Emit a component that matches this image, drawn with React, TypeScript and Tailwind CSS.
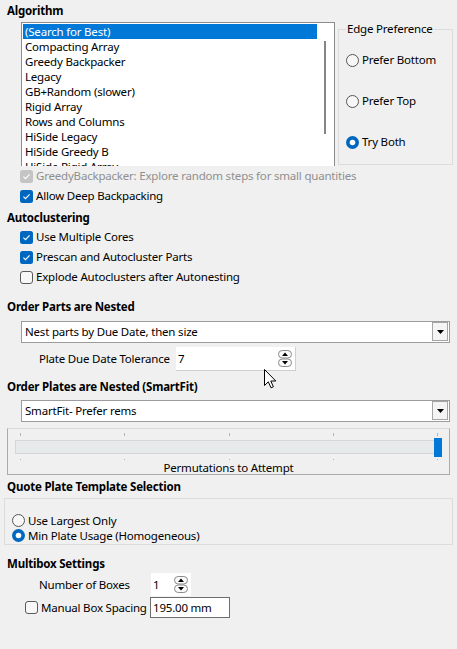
import React from 'react';

const algorithms = [
  '(Search for Best)',
  'Compacting Array',
  'Greedy Backpacker',
  'Legacy',
  'GB+Random (slower)',
  'Rigid Array',
  'Rows and Columns',
  'HiSide Legacy',
  'HiSide Greedy B',
  'HiSide Rigid Array',
];

function CheckBox({ checked, disabled }: { checked?: boolean; disabled?: boolean }) {
  const fill = disabled ? '#c4c4c4' : checked ? '#0067c0' : '#f7f7f7';
  return (
    <svg width="13" height="13" viewBox="0 0 13 13" className="shrink-0">
      <rect
        x={checked || disabled ? 0 : 0.5}
        y={checked || disabled ? 0 : 0.5}
        width={checked || disabled ? 13 : 12}
        height={checked || disabled ? 13 : 12}
        rx="2.5"
        fill={fill}
        stroke={checked || disabled ? 'none' : '#5a5a5a'}
      />
      {(checked || disabled) && (
        <path d="M3.4 6.7 L5.5 8.7 L9.6 4.3" fill="none" stroke="#fff" strokeWidth="1.1" />
      )}
    </svg>
  );
}

function RadioDot({ checked }: { checked?: boolean }) {
  return (
    <svg width="13" height="13" viewBox="0 0 13 13" className="shrink-0">
      {checked ? (
        <>
          <circle cx="6.5" cy="6.5" r="6.5" fill="#0067c0" />
          <circle cx="6.5" cy="6.5" r="2.8" fill="#fff" />
        </>
      ) : (
        <circle cx="6.5" cy="6.5" r="6" fill="#f7f7f7" stroke="#555" />
      )}
    </svg>
  );
}

function Check({ label, checked, disabled }: { label: string; checked?: boolean; disabled?: boolean }) {
  return (
    <div className="flex items-center h-[20px] pl-[20px] gap-[3px]">
      <CheckBox checked={checked} disabled={disabled} />
      <span className={`whitespace-nowrap ${disabled ? 'text-[#8f8f8f]' : ''}`}>{label}</span>
    </div>
  );
}

function Radio({ label, checked, className = '' }: { label: string; checked?: boolean; className?: string }) {
  return (
    <div className={`flex items-center gap-[3px] ${className}`}>
      <RadioDot checked={checked} />
      <span className="whitespace-nowrap">{label}</span>
    </div>
  );
}

function Heading({ children, className = '' }: { children: React.ReactNode; className?: string }) {
  return <div className={`flex items-center pl-[7px] font-bold whitespace-nowrap ${className}`}>{children}</div>;
}

function Combo({ text }: { text: string }) {
  return (
    <div className="flex items-center ml-[21px] w-[429px] h-[22px] bg-white border border-[#9c9c9c] pl-[3px] pr-[1px]">
      <span className="flex-1 whitespace-nowrap">{text}</span>
      <div className="flex items-center justify-center w-[16px] h-[19px] mb-[1px] border border-[#a6a6a6] bg-[#f4f4f4]">
        <svg width="7" height="4" viewBox="0 0 7 4">
          <path d="M0 0 H7 L3.5 4 Z" fill="#000" />
        </svg>
      </div>
    </div>
  );
}

function SpinButtons() {
  return (
    <svg width="14" height="17" viewBox="0 0 14 17" className="shrink-0">
      <rect x="0.5" y="0.5" width="13" height="7.5" rx="3.7" fill="#fafafa" stroke="#8a8a8a" />
      <rect x="0.5" y="9" width="13" height="7.5" rx="3.7" fill="#fafafa" stroke="#8a8a8a" />
      <path d="M4 6 L7 2.6 L10 6 Z" fill="#000" />
      <path d="M4 11 L7 14.4 L10 11 Z" fill="#000" />
    </svg>
  );
}

export default function App() {
  return (
    <div className="relative w-[457px] h-[649px] overflow-hidden bg-[#f0f0f0] font-['Noto_Sans',sans-serif] text-[11.5px] tracking-[-0.2px] leading-[16px] text-black">
      {/* Algorithm */}
      <Heading className="h-[19px] pt-[3px]">Algorithm</Heading>
      <div className="flex mt-[3px] h-[144px]">
        <div className="relative ml-[21px] w-[314px] h-[144px] bg-white border-l border-t border-r border-[#8c8c8c] pt-[1px] overflow-hidden">
          {algorithms.map((a, i) => (
            <div
              key={a}
              className={`h-[15px] leading-[15px] ml-[1px] w-[294px] pl-[2px] whitespace-nowrap ${
                i === 0 ? 'bg-[#0078d7] text-white' : ''
              }`}
            >
              {a}
            </div>
          ))}
          <div className="absolute left-[302px] top-[18px] w-[2px] h-[93px] bg-[#858585]" />
        </div>
        <div className="relative ml-[3px] mt-[7px] w-[115px] h-[136px] border border-[#dcdcdc]">
          <div className="absolute left-[7px] -top-[9px] px-[1px] bg-[#f0f0f0] whitespace-nowrap">Edge Preference</div>
          <div className="flex flex-col pt-[22px] pl-[7px] gap-[25px]">
            <Radio label="Prefer Bottom" className="h-[16px]" />
            <Radio label="Prefer Top" className="h-[16px]" />
            <Radio label="Try Both" checked className="h-[16px]" />
          </div>
        </div>
      </div>
      <Check label="GreedyBackpacker: Explore random steps for small quantities" disabled />
      <Check label="Allow Deep Backpacking" checked />

      {/* Autoclustering */}
      <Heading className="mt-[2px] h-[19px]">Autoclustering</Heading>
      <Check label="Use Multiple Cores" checked />
      <Check label="Prescan and Autocluster Parts" checked />
      <Check label="Explode Autoclusters after Autonesting" />

      {/* Order Parts */}
      <Heading className="mt-[10px] h-[20px]">Order Parts are Nested</Heading>
      <div className="mt-[4px]">
        <Combo text="Nest parts by Due Date, then size" />
      </div>
      <div className="flex items-center mt-[4px] h-[24px]">
        <div className="w-[176px] pl-[39px] whitespace-nowrap">Plate Due Date Tolerance</div>
        <div className="flex items-center w-[120px] h-[24px] bg-white border-r border-b border-[#cfcfcf] pl-[2px] pr-[3px]">
          <span className="flex-1">7</span>
          <SpinButtons />
        </div>
      </div>

      {/* Order Plates */}
      <Heading className="mt-[6px] h-[20px]">Order Plates are Nested (SmartFit)</Heading>
      <div className="mt-[3px]">
        <Combo text="SmartFit- Prefer rems" />
      </div>
      <div className="ml-[7px] mt-[6px] w-[443px] h-[47px] border border-[#ababab] border-t-[#d9d9d9]">
        <div className="flex justify-between ml-[12px] w-[418px] mt-[4px] h-[3px]">
          {[0, 1, 2, 3, 4].map((t) => (
            <div key={t} className="w-[1px] h-[3px] bg-[#b4b4b4]" />
          ))}
        </div>
        <div className="relative ml-[7px] mt-[4px] w-[427px] h-[14px] bg-[#e7eaea] border border-[#d6d6d6]">
          <div className="absolute -right-[1px] -top-[3px] w-[8px] h-[19px] bg-[#0078d7]" />
        </div>
        <div className="flex justify-between ml-[12px] w-[418px] mt-[5px] h-[2px]">
          {[0, 1, 2, 3, 4].map((t) => (
            <div key={t} className="w-[1px] h-[1px] bg-[#b4b4b4]" />
          ))}
        </div>
        <div className="text-center leading-[13px] h-[13px] whitespace-nowrap">Permutations to Attempt</div>
      </div>

      {/* Quote Plate Template */}
      <Heading className="mt-[2px] h-[20px]">Quote Plate Template Selection</Heading>
      <div className="ml-[4px] mt-[1px] w-[449px] h-[47px] border border-[#dcdcdc] pt-[14px] pl-[7px]">
        <Radio label="Use Largest Only" className="h-[15px]" />
        <Radio label="Min Plate Usage (Homogeneous)" checked className="h-[15px]" />
      </div>

      {/* Multibox */}
      <Heading className="mt-[10px] h-[18px]">Multibox Settings</Heading>
      <div className="flex items-center h-[23px]">
        <div className="w-[151px] pl-[39px] whitespace-nowrap">Number of Boxes</div>
        <div className="flex items-center w-[40px] h-[23px] bg-white pl-[2px] pr-[3px]">
          <span className="flex-1">1</span>
          <SpinButtons />
        </div>
      </div>
      <div className="flex items-center mt-[1px] h-[21px]">
        <div className="flex items-center gap-[3px] w-[150px] pl-[25px] overflow-hidden whitespace-nowrap">
          <CheckBox />
          <span>Manual Box Spacing</span>
        </div>
        <div className="flex items-center w-[80px] h-[21px] bg-white border border-[#6e6e6e] pl-[2px] whitespace-nowrap">
          195.00 mm
        </div>
      </div>

      {/* mouse pointer */}
      <svg className="absolute left-[264px] top-[369px]" width="13" height="20" viewBox="0 0 13 20">
        <path
          d="M0.5 0.5 L0.5 16.5 L4.3 12.8 L7 18.8 L9.4 17.8 L6.8 12 L11.8 12 Z"
          fill="#fff"
          stroke="#000"
          strokeWidth="1"
          strokeLinejoin="round"
        />
      </svg>
    </div>
  );
}
